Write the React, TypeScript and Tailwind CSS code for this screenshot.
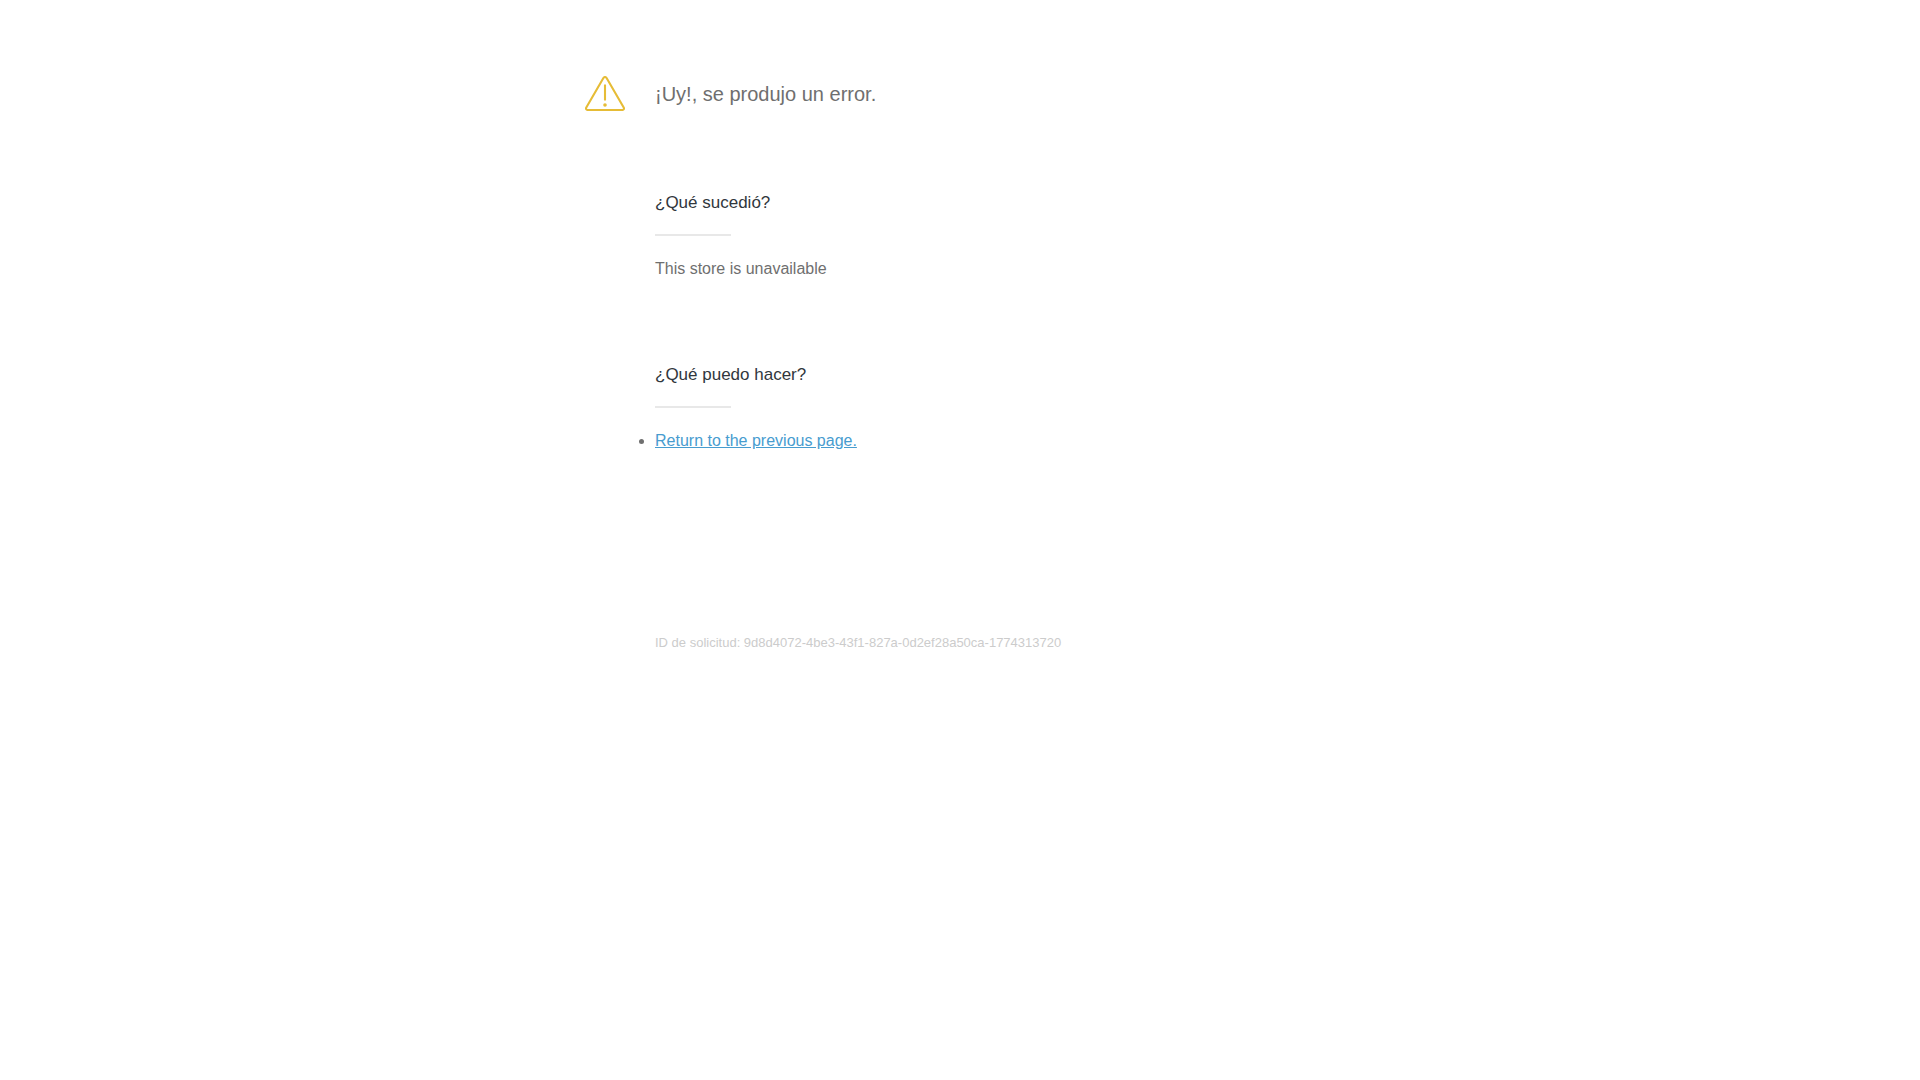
interface SectionProps {
  title: string;
  children: React.ReactNode;
}

function WarningIcon() {
  return (
    <svg width="40" height="35" viewBox="0 0 40 35" fill="none" stroke="#e6bc36" strokeWidth="2.1" className="shrink-0" aria-hidden="true">
      <path d="M18.4 2 1.3 31.4c-.7 1.300 0 2.600 1.500 2.600h34.400c1.500 0 2.200-1.300 1.500-2.600L21.600 2c-.8-1.300-2.400-1.300-3.200 0Z" />
      <path d="M20 8.500v16" />
      <circle cx="20" cy="29" r="1.800" fill="#e6bc36" stroke="none" />
    </svg>
  );
}

function Section({ title, children }: SectionProps) {
  return (
    <section className="mb-[82px]">
      <h2 className="text-[17px] leading-[22px] text-[#31373d]">{title}</h2>
      <hr className="my-5 w-[76px] border-t-2 border-[#e8e8e8]" />
      <div className="text-base leading-[26px]">{children}</div>
    </section>
  );
}

export default function App() {
  return (
    <main className="mx-auto max-w-[750px] pt-19 font-['Liberation_Sans',Arial,sans-serif] text-[#6f6f6f]">
      <header className="flex items-start gap-[30px]">
        <WarningIcon />
        <h1 className="text-xl leading-9">¡Uy!, se produjo un error.</h1>
      </header>
      <div className="mt-20 pl-[70px]">
        <Section title="¿Qué sucedió?">
          <p>This store is unavailable</p>
        </Section>
        <Section title="¿Qué puedo hacer?">
          <ul className="list-disc">
            <li>
              <a href="#" className="text-[#479ccf] underline">Return to the previous page.</a>
            </li>
          </ul>
        </Section>
        <p className="mt-45 text-[13px] leading-[18px] text-[#cccccc]">
          ID de solicitud: 9d8d4072-4be3-43f1-827a-0d2ef28a50ca-1774313720
        </p>
      </div>
    </main>
  );
}
